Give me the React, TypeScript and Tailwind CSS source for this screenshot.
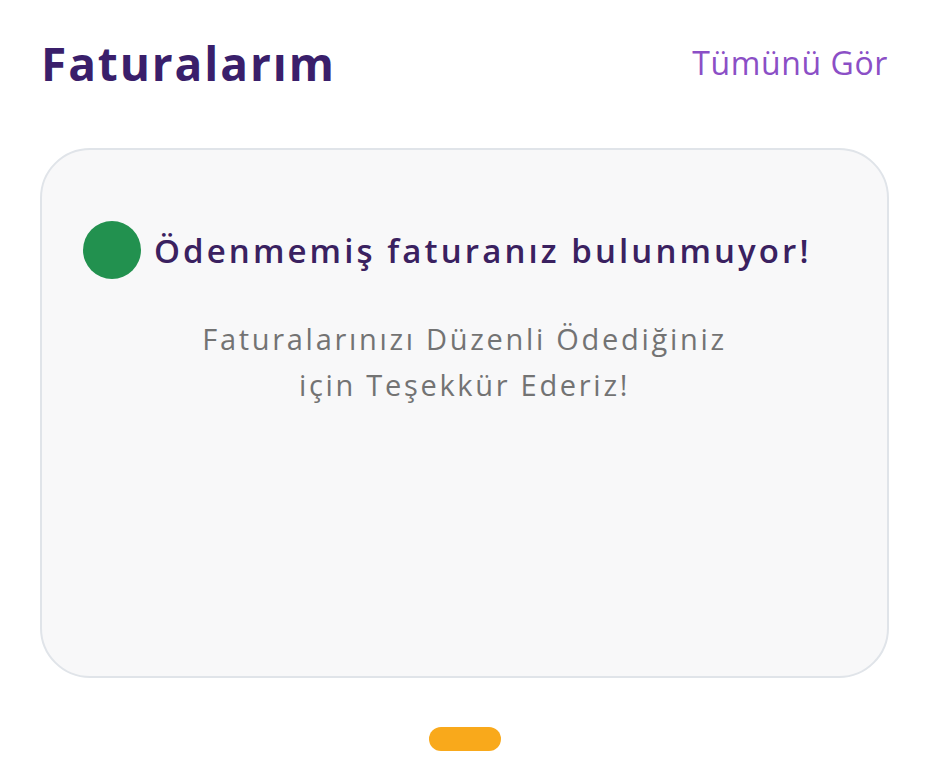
import React from "react";

export default function App() {
  return (
    <div
      className="w-[929px] h-[768px] bg-white flex flex-col"
      style={{ fontFamily: "'Open Sans', 'Noto Sans', sans-serif" }}
    >
      <div className="flex items-center justify-between pl-[41px] pr-[41px] pt-[26px] h-[100px]">
        <h1 className="text-[46px] font-bold text-[#3a1f6b] leading-none tracking-[1.9px]">Faturalarım</h1>
        <span className="text-[32px] text-[#8b4fc6] leading-none tracking-[0.6px]">Tümünü Gör</span>
      </div>
      <div className="mx-[40px] mt-[48px] h-[530px] rounded-[50px] border-2 border-[#e0e4e9] bg-[#f8f8f9] flex flex-col items-center">
        <div className="flex items-center gap-[13px] mt-[71px] self-start ml-[41px]">
          <div className="w-[58px] h-[58px] rounded-full bg-[#22914f]" />
          <span className="text-[33px] font-semibold text-[#3a2160] leading-none tracking-[3.1px]">Ödenmemiş faturanız bulunmuyor!</span>
        </div>
        <p className="mt-[37px] text-center text-[29px] leading-[46px] text-[#737373] tracking-[2.7px]">
          Faturalarınızı Düzenli Ödediğiniz
          <br />
          için Teşekkür Ederiz!
        </p>
      </div>
      <div className="flex justify-center mt-[49px]">
        <div className="w-[72px] h-[24px] rounded-full bg-[#f9a91b]" />
      </div>
    </div>
  );
}
